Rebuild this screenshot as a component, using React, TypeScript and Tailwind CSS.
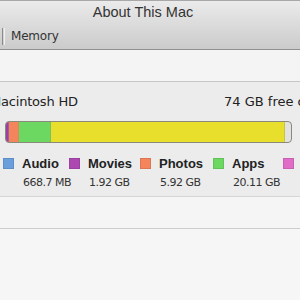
import React from 'react';

const segments = [
  { color: 'bg-[#9b3fa6]', width: 3 },
  { color: 'bg-[#f4845c]', width: 10 },
  { color: 'bg-[#6cd862]', width: 32 },
  { color: 'bg-[#e8df2c]', width: 234 },
];

const legend = [
  { label: 'Audio', size: '668.7 MB', color: 'bg-[#6a9fdc]', width: 'w-[66px]' },
  { label: 'Movies', size: '1.92 GB', color: 'bg-[#ac48b0]', width: 'w-[71px]' },
  { label: 'Photos', size: '5.92 GB', color: 'bg-[#f4845c]', width: 'w-[73px]' },
  { label: 'Apps', size: '20.11 GB', color: 'bg-[#6cd862]', width: 'w-[70px]' },
  { label: 'Other', size: '45.2 GB', color: 'bg-[#e06cc8]', width: 'w-[70px]' },
];

export default function App() {
  return (
    <div className="w-[300px] h-[300px] overflow-hidden bg-[#f6f6f6] font-['DejaVu_Sans',sans-serif] flex flex-col">
      {/* Title bar + toolbar */}
      <div className="h-[50px] shrink-0 border-t border-[#a8a8a8] border-b border-b-[#8f8f8f] bg-gradient-to-b from-[#ebebeb] to-[#cbcbcb] flex flex-col">
        <div className="h-[24px] pr-[14px] flex items-center justify-center font-['Liberation_Sans',sans-serif] text-[14.5px] text-[#333]">
          About This Mac
        </div>
        <div className="flex items-center h-[20px] mt-[1px]">
          <div className="w-[3px] h-[17px] ml-[2px] border-l border-[#8a8a8a] border-r border-r-[#f0f0f0]" />
          <span className="ml-[6px] text-[12px] text-[#333] tracking-[-0.2px]">Memory</span>
        </div>
      </div>

      <div className="h-[32px] shrink-0 bg-[#f4f4f4] border-b border-[#c6c6c6]" />

      {/* Storage panel */}
      <div className="h-[115px] shrink-0 bg-[#ececec] border-b border-[#d6d6d6] flex flex-col">
        <div className="flex items-center h-[20px] mt-[10px] text-[#222] whitespace-nowrap">
          <span className="ml-[-10px] w-[234px] shrink-0 text-[13px] tracking-[-0.2px]">Macintosh HD</span>
          <span className="text-[13px]">74 GB free of 121 GB</span>
        </div>
        <div className="mt-[9px] ml-[5px] w-[287px] h-[22px] rounded-[4px] border border-[#8a8a7a] bg-[#e2e2e2] overflow-hidden flex">
          {segments.map((s, i) => (
            <div key={i} className={`${s.color} h-full shrink-0 border-r border-[#9a9a6a]/40`} style={{ width: s.width }} />
          ))}
        </div>
        <div className="flex mt-[13px] ml-[3px] whitespace-nowrap">
          {legend.map((l) => (
            <div key={l.label} className={`${l.width} shrink-0 flex`}>
              <div className={`w-[11px] h-[11px] shrink-0 mt-[2px] ${l.color} border border-black/10`} />
              <div className="ml-[8px] flex flex-col">
                <span className="font-['Liberation_Sans',sans-serif] text-[13px] font-bold text-[#222] leading-[15px]">{l.label}</span>
                <span className="text-[11px] text-[#333] mt-[5px] leading-[13px] ml-[1px] tracking-[-0.5px]">{l.size}</span>
              </div>
            </div>
          ))}
        </div>
      </div>

      <div className="h-[32px] shrink-0 bg-[#f5f5f5] border-b border-[#cdcdcd]" />
      <div className="flex-1 bg-[#f6f6f6]" />
    </div>
  );
}
